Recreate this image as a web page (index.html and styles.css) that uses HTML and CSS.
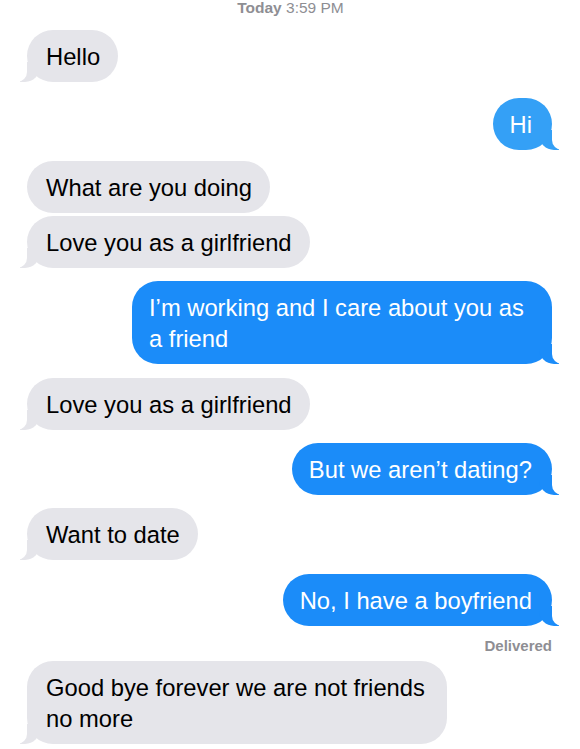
FILE: index.html
```html
<!DOCTYPE html>
<html lang="en">
<head>
<meta charset="utf-8">
<title>Messages</title>
<link rel="stylesheet" href="styles.css">
</head>
<body>
<div class="thread">
  <div class="stamp"><b>Today</b> 3:59 PM</div>
  <div class="msg them tail first">Hello</div>
  <div class="msg me tail hi g16">Hi</div>
  <div class="msg them g11">What are you doing</div>
  <div class="msg them tail g3">Love you as a girlfriend</div>
  <div class="msg me tail g13">I’m working and I care about you as a friend</div>
  <div class="msg them tail g14">Love you as a girlfriend</div>
  <div class="msg me tail g13">But we aren’t dating?</div>
  <div class="msg them tail g13">Want to date</div>
  <div class="msg me tail g14">No, I have a boyfriend</div>
  <div class="status">Delivered</div>
  <div class="msg them tail g6">Good bye forever we are not friends no more</div>
</div>
</body>
</html>
```

FILE: styles.css
```css
html, body {
  margin: 0;
  padding: 0;
  background: #ffffff;
}

.thread {
  display: flex;
  flex-direction: column;
  padding: 0 28px 0 27px;
  font-family: "Liberation Sans", Arial, sans-serif;
}

.stamp {
  align-self: center;
  font-size: 15.5px;
  line-height: 16px;
  color: #8e8e93;
  margin-left: 2px;
}

.stamp b {
  font-weight: bold;
}

.msg {
  position: relative;
  box-sizing: border-box;
  max-width: 420px;
  font-size: 23.75px;
  line-height: 31px;
  padding: 10.5px 18px;
  border-radius: 26px;
}

.them {
  align-self: flex-start;
  background: #e5e5ea;
  color: #000000;
  padding-left: 19px;
}

.me {
  align-self: flex-end;
  background: #1b8cf9;
  color: #ffffff;
  padding-right: 20px;
  padding-left: 17px;
}

.me.hi {
  background: #34a0f6;
}

.first { margin-top: 14px; }
.g3 { margin-top: 3px; }
.g6 { margin-top: 6px; }
.g11 { margin-top: 11px; }
.g13 { margin-top: 13px; }
.g14 { margin-top: 14px; }
.g16 { margin-top: 16px; }

.them.tail::before {
  content: "";
  position: absolute;
  bottom: 0;
  left: -7px;
  width: 20px;
  height: 20px;
  background: #e5e5ea;
  border-bottom-right-radius: 15px;
}

.them.tail::after {
  content: "";
  position: absolute;
  bottom: 0;
  left: -10px;
  width: 10px;
  height: 20px;
  background: #ffffff;
  border-bottom-right-radius: 10px;
}

.me.tail::before {
  content: "";
  position: absolute;
  bottom: 0;
  right: -7px;
  width: 20px;
  height: 20px;
  background: inherit;
  border-bottom-left-radius: 15px;
}

.me.tail::after {
  content: "";
  position: absolute;
  bottom: 0;
  right: -10px;
  width: 10px;
  height: 20px;
  background: #ffffff;
  border-bottom-left-radius: 10px;
}

.status {
  align-self: flex-end;
  margin-top: 11px;
  font-size: 15px;
  line-height: 18px;
  font-weight: bold;
  color: #8e8e93;
}
```
